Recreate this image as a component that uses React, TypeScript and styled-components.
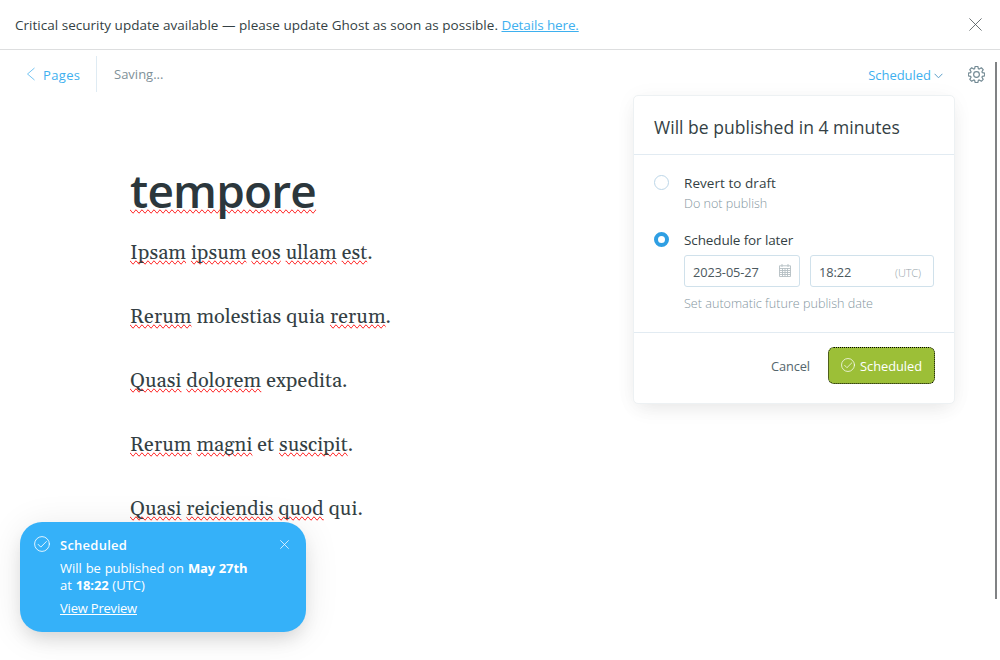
import React from 'react';
import styled, { createGlobalStyle } from 'styled-components';

const GlobalStyle = createGlobalStyle`
  *, *::before, *::after { box-sizing: border-box; }
  html, body { margin: 0; padding: 0; overflow: hidden; }
  body {
    background: #fff;
    color: #343f44;
    font-family: "Open Sans", "Noto Sans", sans-serif;
    font-size: 13px;
  }
  button { font: inherit; border: 0; background: none; padding: 0; }
`;

const Screen = styled.div`
  position: relative;
  display: flex;
  flex-direction: column;
  width: 1000px;
  height: 660px;
  overflow: hidden;
`;

const Banner = styled.div`
  display: flex;
  align-items: center;
  justify-content: space-between;
  height: 50px;
  padding: 0 18px 0 15px;
  border-bottom: 1px solid #dddedf;
`;

const BannerText = styled.p`
  margin: 1px 0 0;
  font-size: 13.5px;
  line-height: 20px;
  letter-spacing: 0.018px;
  white-space: pre;
`;

const BannerLink = styled.a`
  color: #3eb0ef;
  letter-spacing: -0.13px;
  text-decoration: underline;
`;

const IconButton = styled.button`
  display: flex;
`;

const Header = styled.header`
  display: flex;
  align-items: center;
  height: 48px;
  padding: 0 15px 0 26px;
`;

const BackLink = styled.a`
  display: flex;
  align-items: center;
  width: 71px;
  height: 36px;
  border-right: 1px solid #dfebf3;
  color: #3eb0ef;
  svg { margin-right: 7px; }
`;

const BackLabel = styled.span`
  padding-top: 2px;
  letter-spacing: 0.35px;
`;

const Status = styled.span`
  flex: 1;
  padding-left: 17px;
  color: #809199;
`;

const PublishTrigger = styled.button`
  display: flex;
  align-items: center;
  margin-right: 25px;
  padding-top: 2px;
  color: #3eb0ef;
  letter-spacing: -0.03px;
  svg { margin: 2px 0 0 3px; }
`;

const Editor = styled.main`
  padding: 64px 0 0 130px;
  color: #343f44;
`;

const Title = styled.h1`
  margin: 0 0 19px;
  color: #2c373c;
  font-size: 46px;
  font-weight: 600;
  line-height: 56px;
  letter-spacing: -0.8px;
`;

const Paragraph = styled.p`
  margin: 0 0 32px;
  font: 20px/32px Gelasio, Georgia, "Liberation Serif", serif;
  letter-spacing: 0.09px;
`;

const Misspelled = styled.span`
  text-decoration-line: spelling-error;
`;

const Popover = styled.section`
  position: absolute;
  top: 95px;
  left: 633px;
  width: 322px;
  height: 309px;
  border: 1px solid #edf1f3;
  border-radius: 5px;
  background: #fff;
  box-shadow: 0 8px 20px -5px rgba(0, 0, 0, 0.08), 0 2px 22px rgba(0, 0, 0, 0.04);
`;

const PopoverTitle = styled.h2`
  height: 59px;
  margin: 0;
  padding: 17px 20px 0;
  border-bottom: 1px solid #e2ebf2;
  font-size: 17.5px;
  font-weight: 400;
  line-height: 28px;
  letter-spacing: 0.03px;
`;

const Options = styled.div`
  display: flex;
  flex-direction: column;
  gap: 16px;
  height: 178px;
  padding: 18px 20px 0;
  border-bottom: 1px solid #e2ebf2;
`;

const Option = styled.div`
  display: grid;
  grid-template-columns: 15px 1fr;
  column-gap: 15px;
`;

const Radio = styled.span<{ $checked?: boolean }>`
  width: 15px;
  height: 15px;
  margin-top: 2px;
  border: ${(p) => (p.$checked ? '4px solid #2f9fe3' : '1px solid #bcd6e8')};
  border-radius: 50%;
  background: #fff;
`;

const OptionLabel = styled.div<{ $spacing: string }>`
  font-size: 13.5px;
  line-height: 20px;
  letter-spacing: ${(p) => p.$spacing};
`;

const Hint = styled.div`
  margin-top: 1px;
  color: #8496a0;
  font-size: 12.6px;
  font-weight: 300;
  line-height: 20px;
`;

const Fields = styled.div`
  display: flex;
  gap: 10px;
  margin: 5px 0 7px;
`;

const Field = styled.div<{ $width: number; $end: number }>`
  display: flex;
  align-items: center;
  justify-content: space-between;
  width: ${(p) => p.$width}px;
  height: 32px;
  padding: 2px ${(p) => p.$end}px 0 8px;
  border: 1px solid #d0e1eb;
  border-radius: 3px;
  color: #4b585e;
  font-size: 12.8px;
  letter-spacing: -0.1px;
  svg { margin-top: -3px; }
`;

const Zone = styled.span`
  color: #96a3aa;
  font-size: 11px;
  font-weight: 300;
`;

const Actions = styled.footer`
  display: flex;
  align-items: center;
  justify-content: flex-end;
  gap: 18px;
  padding: 14px 19px 0 0;
`;

const CancelButton = styled.button`
  color: #54666d;
  font-size: 12.8px;
  letter-spacing: -0.1px;
`;

const ConfirmButton = styled.button`
  display: flex;
  align-items: center;
  gap: 5px;
  width: 107px;
  height: 37px;
  padding: 1px 0 0 12px;
  border: 1px dotted #000;
  border-radius: 6px;
  background: #9cbf37;
  color: #fff;
  font-size: 12.8px;
  svg { margin-top: -2px; }
`;

const Toast = styled.aside`
  position: absolute;
  top: 522px;
  left: 20px;
  display: flex;
  align-items: flex-start;
  width: 286px;
  height: 110px;
  padding: 14px 17px 0 14px;
  border-radius: 22px;
  background: #35b1f9;
  color: #fff;
  box-shadow: 0 10px 18px -4px rgba(0, 0, 0, 0.12), 0 4px 36px rgba(0, 0, 0, 0.09);
`;

const ToastBody = styled.div`
  flex: 1;
  padding-left: 10px;
  line-height: 18px;
`;

const ToastTitle = styled.div`
  font-weight: 600;
  letter-spacing: 0.25px;
`;

const ToastText = styled.p`
  margin: 6px 0;
  line-height: 17px;
  white-space: nowrap;
  word-spacing: 0.4px;
  b { letter-spacing: -0.1px; }
`;

const ToastLink = styled.a`
  display: block;
  line-height: 17px;
  letter-spacing: -0.2px;
  text-decoration: underline;
`;

const ToastClose = styled(IconButton)`
  margin: 4px 0 0;
  color: #fff;
`;

const ScrollThumb = styled.div`
  position: absolute;
  top: 62px;
  right: 3px;
  width: 2px;
  height: 537px;
  background: #808284;
`;

const CloseIcon = ({ size, color }: { size: number; color: string }) => (
  <svg width={size} height={size} viewBox="0 0 12 12" fill="none" stroke={color} strokeWidth={size > 10 ? 0.75 : 1}>
    <path d="M.4.4l11.2 11.2M11.6.4L.4 11.6" />
  </svg>
);

const CheckIcon = ({ size }: { size: number }) => (
  <svg width={size} height={size} viewBox="0 0 16 16" fill="none" stroke="#fff" strokeOpacity="0.85" strokeLinecap="round" strokeLinejoin="round">
    <circle cx="8" cy="8" r="7.4" />
    <path d="M4.2 8.4l2.6 2.7 5.6-5.6" />
  </svg>
);

const CalendarIcon = () => (
  <svg width="12" height="13" viewBox="0 0 12 13" fill="none" stroke="#b4bec3" strokeWidth="0.9">
    <path d="M.5 1.8h11v10.7H.5zM.5 4.5h11M.5 6.5h11M.5 8.5h11M.5 10.5h11M3.5 4v8.5M6 4v8.5M8.5 4v8.5M3 0v3M9 0v3" />
  </svg>
);

const toothPoints: string = Array.from({ length: 8 }, (_, i) => {
  const centre = (i * Math.PI) / 4;
  return [[-0.32, 5.7], [-0.16, 7.8], [0.16, 7.8], [0.32, 5.7]]
    .map(([a, r]) => `${(8 + r * Math.sin(centre + a)).toFixed(2)} ${(8 - r * Math.cos(centre + a)).toFixed(2)}`)
    .join('L');
}).join('L');

const GearIcon = () => (
  <svg width="17" height="17" viewBox="0 0 16 16" fill="none" stroke="#738a94" strokeWidth="1.1" strokeLinejoin="round">
    <path d={`M${toothPoints}Z`} />
    <circle cx="8" cy="8" r="2.7" />
  </svg>
);

const paragraphs: [string, boolean][][] = [
  [['Ipsam', true], ['ipsum', true], ['eos', true], ['ullam', true], ['est', true]],
  [['Rerum', true], ['molestias', false], ['quia', false], ['rerum', true]],
  [['Quasi', true], ['dolorem', true], ['expedita', false]],
  [['Rerum', true], ['magni', true], ['et', false], ['suscipit', true]],
  [['Quasi', true], ['reiciendis', true], ['quod', true], ['qui', false]],
];

export default function App() {
  return (
    <Screen>
      <GlobalStyle />
      <Banner>
        <BannerText>
          Critical security update available — please update Ghost as soon as possible.{' '}
          <BannerLink>Details here.</BannerLink>
        </BannerText>
        <IconButton aria-label="Dismiss"><CloseIcon size={13} color="#4a5256" /></IconButton>
      </Banner>
      <Header>
        <BackLink>
          <svg width="10" height="14" viewBox="0 0 10 14" fill="none" stroke="#64bdf0" strokeWidth="0.9"><path d="M8.5 1L1.5 7l7 6" /></svg>
          <BackLabel>Pages</BackLabel>
        </BackLink>
        <Status>Saving...</Status>
        <PublishTrigger>
          Scheduled
          <svg width="9" height="6" viewBox="0 0 9 6" fill="none" stroke="#5c9fc8"><path d="M.6.8l3.9 4 3.9-4" /></svg>
        </PublishTrigger>
        <IconButton aria-label="Settings"><GearIcon /></IconButton>
      </Header>
      <Editor>
        <Title><Misspelled>tempore</Misspelled></Title>
        {paragraphs.map((words, i) => (
          <Paragraph key={i}>
            {words.map(([word, flagged], j) => (
              <React.Fragment key={j}>
                {j > 0 && ' '}
                {flagged ? <Misspelled>{word}</Misspelled> : word}
              </React.Fragment>
            ))}
            .
          </Paragraph>
        ))}
      </Editor>
      <ScrollThumb />
      <Popover>
        <PopoverTitle>Will be published in 4 minutes</PopoverTitle>
        <Options>
          <Option>
            <Radio />
            <div>
              <OptionLabel $spacing="0.05px">Revert to draft</OptionLabel>
              <Hint>Do not publish</Hint>
            </div>
          </Option>
          <Option>
            <Radio $checked />
            <div>
              <OptionLabel $spacing="-0.12px">Schedule for later</OptionLabel>
              <Fields>
                <Field $width={116} $end={8}>2023-05-27<CalendarIcon /></Field>
                <Field $width={124} $end={12}>18:22<Zone>(UTC)</Zone></Field>
              </Fields>
              <Hint>Set automatic future publish date</Hint>
            </div>
          </Option>
        </Options>
        <Actions>
          <CancelButton>Cancel</CancelButton>
          <ConfirmButton><CheckIcon size={14} />Scheduled</ConfirmButton>
        </Actions>
      </Popover>
      <Toast>
        <CheckIcon size={16} />
        <ToastBody>
          <ToastTitle>Scheduled</ToastTitle>
          <ToastText>
            Will be published on <b>May 27th</b><br />at <b>18:22</b> (UTC)
          </ToastText>
          <ToastLink>View Preview</ToastLink>
        </ToastBody>
        <ToastClose aria-label="Close"><CloseIcon size={9} color="#fff" /></ToastClose>
      </Toast>
    </Screen>
  );
}
